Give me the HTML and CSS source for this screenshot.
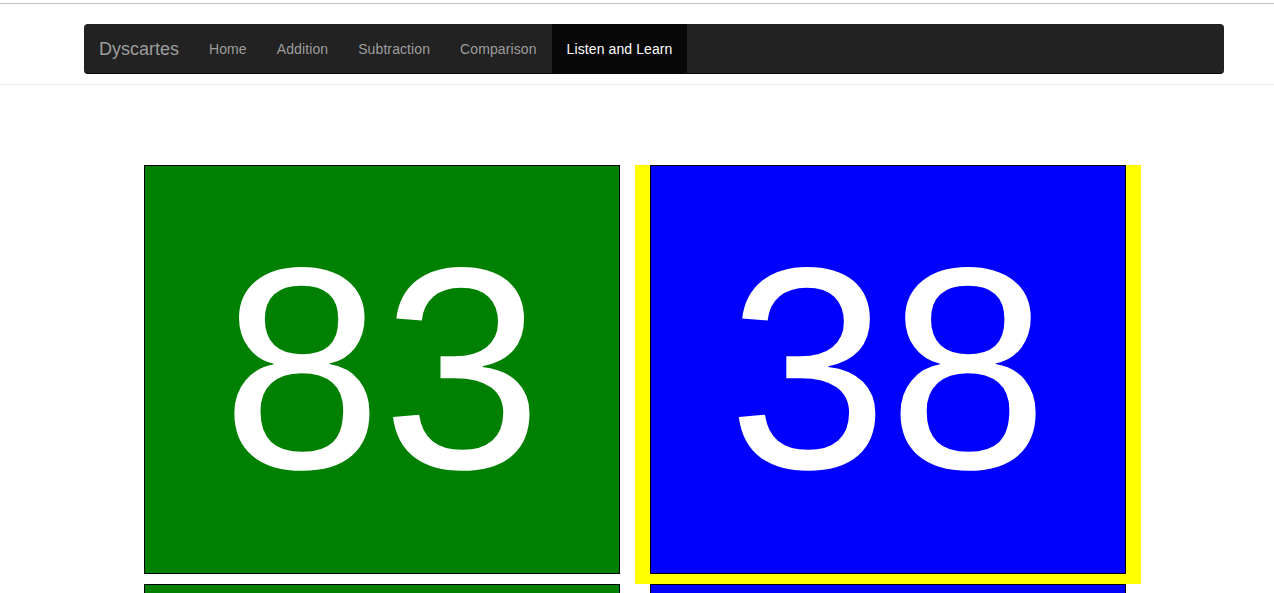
FILE: index.html
```html
<!DOCTYPE html>
<html>
<head>
<meta charset="utf-8">
<title>Dyscartes</title>
<link rel="stylesheet" href="styles.css">
</head>
<body>
<div class="topline"></div>
<header class="header">
  <nav class="navbar">
    <a class="brand" href="#">Dyscartes</a>
    <ul class="nav">
      <li><a href="#">Home</a></li>
      <li><a href="#">Addition</a></li>
      <li><a href="#">Subtraction</a></li>
      <li><a href="#">Comparison</a></li>
      <li class="active"><a href="#">Listen and Learn</a></li>
    </ul>
  </nav>
</header>
<main class="content">
  <div class="grid">
    <div class="cell"><div class="card green">83</div></div>
    <div class="cell selected"><div class="card blue">38</div></div>
    <div class="cell"><div class="card green">29</div></div>
    <div class="cell"><div class="card blue">92</div></div>
  </div>
</main>
</body>
</html>
```
FILE: styles.css
```css
html, body {
  margin: 0;
  padding: 0;
  background: #fff;
  font-family: "Liberation Sans", Arial, sans-serif;
}
.topline {
  margin-top: 3px;
  border-top: 1px solid #c3c3c3;
}
.header {
  padding-top: 20px;
  padding-bottom: 10px;
  border-bottom: 1px solid #eee;
}
.navbar {
  width: 1140px;
  margin-left: 84px;
  height: 49px;
  background: #222;
  border-bottom: 1px solid #080808;
  border-radius: 4px;
  display: flex;
  align-items: stretch;
}
.brand {
  padding: 15px 15px 14px;
  font-size: 18px;
  line-height: 20px;
  color: #9d9d9d;
  text-decoration: none;
}
.nav {
  list-style: none;
  margin: 0;
  padding: 0;
  display: flex;
}
.nav li a {
  display: block;
  padding: 15px 15px 14px;
  font-size: 14px;
  line-height: 20px;
  color: #9d9d9d;
  text-decoration: none;
  letter-spacing: 0.1px;
}
.nav li.active a {
  background: #080808;
  color: #fff;
}
.content {
  padding-top: 80px;
}
.grid {
  margin-left: 129px;
  width: 1012px;
  display: grid;
  grid-template-columns: 506px 506px;
}
.cell {
  padding: 0 15px;
}
.cell.selected {
  background: #ffff00;
}
.card {
  height: 403px;
  padding-bottom: 4px;
  border: 1px solid #000;
  margin-bottom: 10px;
  display: flex;
  align-items: center;
  justify-content: center;
  color: #fff;
  font-size: 288px;
  line-height: 1;
}
.green { background: #008000; }
.blue { background: #0000ff; }
```
